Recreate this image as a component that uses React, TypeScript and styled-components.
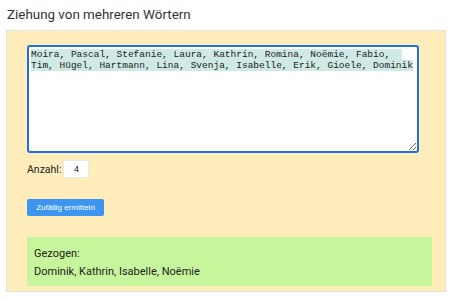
import React, { useEffect, useRef } from 'react';
import styled, { createGlobalStyle } from 'styled-components';

const GlobalStyle = createGlobalStyle`
  body {
    margin: 0;
    background: #ffffff;
    font-family: Roboto, "Noto Sans", sans-serif;
    color: #222;
  }
`;

const Page = styled.div`
  width: 453px;
  padding: 7px 7px 0 6px;
  box-sizing: border-box;
`;

const Title = styled.h2`
  margin: 0 0 0 1px;
  height: 23px;
  font-size: 13.4px;
  line-height: 16px;
  font-weight: 400;
  color: #333;
`;

const Panel = styled.div`
  width: 440px;
  height: 262px;
  box-sizing: border-box;
  background: #feecba;
  border: 1px solid #e6e2d6;
  padding: 14px 14px 0 20px;
  display: flex;
  flex-direction: column;
`;

const WordsInput = styled.textarea`
  width: 392px;
  height: 108px;
  box-sizing: border-box;
  margin: 0;
  padding: 2px 2px;
  border: 2px solid #1f6fe0;
  border-radius: 3px;
  outline: none;
  resize: vertical;
  background: #fff;
  font-family: "Liberation Mono", "DejaVu Sans Mono", monospace;
  font-size: 9.5px;
  line-height: 11px;
  color: #222;

  &::selection {
    background: #cfeae5;
    color: #222;
  }
`;

const CountRow = styled.label`
  display: flex;
  align-items: center;
  gap: 2px;
  margin-top: 7px;
  font-size: 10.5px;
  color: #222;
`;

const CountInput = styled.input`
  width: 26px;
  height: 18px;
  box-sizing: border-box;
  border: 1px solid #e8e8e8;
  border-radius: 1px;
  background: #fff;
  padding: 0;
  text-align: center;
  font-family: "Liberation Sans", Arial, sans-serif;
  font-size: 9px;
  color: #111;
  outline: none;
`;

const DrawButton = styled.button`
  align-self: flex-start;
  margin-top: 21px;
  height: 17px;
  width: 77px;
  padding: 0;
  border: none;
  border-radius: 2px;
  background: #3c95f0;
  color: #fff;
  font-family: "Liberation Sans", Arial, sans-serif;
  font-size: 8px;
  cursor: pointer;
`;

const Result = styled.div`
  margin-top: 21px;
  width: 405px;
  height: 49px;
  box-sizing: border-box;
  background: #c6f59b;
  padding: 8px 7px;
  font-size: 11px;
  line-height: 18px;
  color: #222;
`;

const ResultLine = styled.div``;

const words =
  'Moira, Pascal, Stefanie, Laura, Kathrin, Romina, Noëmie, Fabio, Tim, Hügel, Hartmann, Lina, Svenja, Isabelle, Erik, Gioele, Dominik';

const App = () => {
  const areaRef = useRef<HTMLTextAreaElement>(null);

  useEffect(() => {
    const el = areaRef.current;
    if (el) {
      el.focus();
      el.select();
    }
  }, []);

  return (
    <Page>
      <GlobalStyle />
      <Title>Ziehung von mehreren Wörtern</Title>
      <Panel>
        <WordsInput ref={areaRef} defaultValue={words} spellCheck={false} />
        <CountRow>
          Anzahl:
          <CountInput type="text" defaultValue="4" />
        </CountRow>
        <DrawButton type="button">Zufällig ermitteln</DrawButton>
        <Result>
          <ResultLine>Gezogen:</ResultLine>
          <ResultLine>Dominik, Kathrin, Isabelle, Noëmie</ResultLine>
        </Result>
      </Panel>
    </Page>
  );
};

export default App;
